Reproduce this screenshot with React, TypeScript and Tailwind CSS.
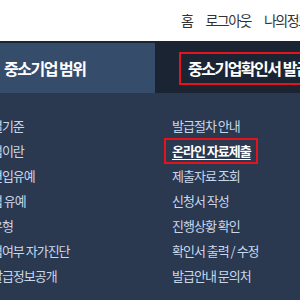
const font = { fontFamily: '"Noto Sans CJK KR", "Noto Sans", sans-serif' };

const leftItems = [
  "업종별기준",
  "소기업이란",
  "중소편입유예",
  "계기업 유예",
  "기업유형",
  "소기업여부 자가진단",
  "인서발급정보공개",
];

const rightItems = [
  "발급절차 안내",
  "온라인 자료제출",
  "제출자료 조회",
  "신청서 작성",
  "진행상황 확인",
  "확인서 출력 / 수정",
  "발급안내 문의처",
];

const App = (): React.ReactElement => {
  return (
    <div className="w-[300px] h-[300px] overflow-hidden bg-[#2a3850]" style={font}>
      <div className="h-[41px] bg-white flex items-center pl-[181px] gap-[13px] whitespace-nowrap text-[14px] tracking-[-1.5px] text-[#333]">
        <span>홈</span>
        <span>로그아웃</span>
        <span>나의정보</span>
      </div>
      <div className="flex h-[52px] border-t-2 border-[#1b2433] whitespace-nowrap">
        <div className="w-[155px] shrink-0 bg-[#364c6b] flex items-center pl-[4px] text-[16px] font-bold tracking-[-1.5px] text-white">
          중소기업 범위
        </div>
        <div className="flex-1 bg-[#1b2433] flex items-center pl-[24px]">
          <div className="h-[33px] pl-[7px] pr-4 border-2 border-[#e5141c] flex items-center text-[16px] font-bold tracking-[-1.5px] text-white">
            중소기업확인서 발급
          </div>
        </div>
      </div>
      <div className="flex pt-[20px] whitespace-nowrap text-[13px] tracking-[-1px] text-[#c9d7ea]">
        <div className="w-[141px] shrink-0 -ml-[31px] flex flex-col">
          {leftItems.map((item) => (
            <div key={item} className="h-[25px] flex items-center">
              {item}
            </div>
          ))}
        </div>
        <div className="pl-[62px] flex flex-col">
          {rightItems.map((item) =>
            item === "온라인 자료제출" ? (
              <div key={item} className="h-[25px] flex items-center">
                <span className="-ml-[8px] h-[26px] pl-[6px] pr-[5px] border-2 border-[#e5141c] flex items-center font-bold text-white underline underline-offset-[3px]">
                  {item}
                </span>
              </div>
            ) : (
              <div key={item} className="h-[25px] flex items-center">
                {item}
              </div>
            )
          )}
        </div>
      </div>
    </div>
  );
};

export default App;
